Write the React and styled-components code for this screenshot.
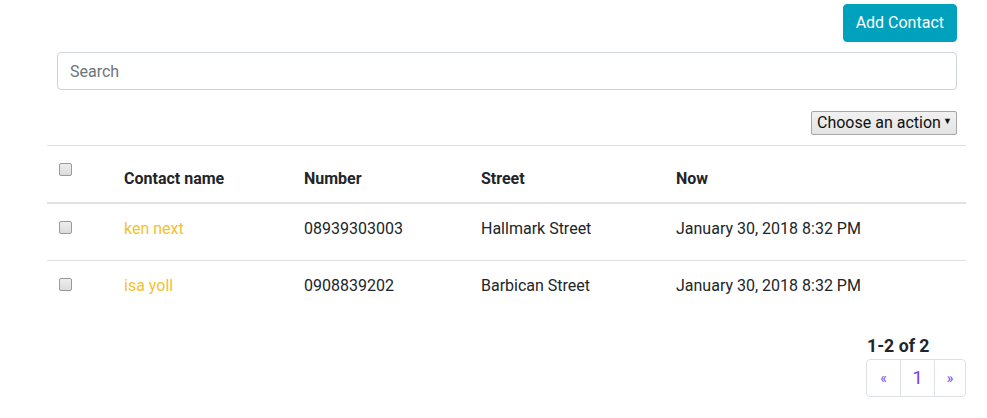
import React from 'react';
import styled, { createGlobalStyle } from 'styled-components';

const GlobalStyle = createGlobalStyle`
  body {
    margin: 0;
    background: #fff;
    color: #212529;
    font-family: Roboto, 'Liberation Sans', Arial, sans-serif;
    font-size: 16px;
    line-height: 1.5;
  }
`;

const contacts = [
  { name: 'ken next', number: '08939303003', street: 'Hallmark Street', now: 'January 30, 2018 8:32 PM' },
  { name: 'isa yoll', number: '0908839202', street: 'Barbican Street', now: 'January 30, 2018 8:32 PM' },
];

const Page = styled.div`
  display: flex;
  flex-direction: column;
`;

const TopBar = styled.div`
  display: flex;
  justify-content: flex-end;
  padding: 4px 30px 0 0;
`;

const AddButton = styled.button`
  height: 38px;
  padding: 6px 12px;
  border: 1px solid #00a1bd;
  border-radius: 4px;
  background: #00a1bd;
  color: #fff;
  font-family: inherit;
  font-size: 16px;
  line-height: 24px;
  cursor: pointer;
`;

const SearchInput = styled.input`
  box-sizing: border-box;
  height: 38px;
  margin: 10px 30px 0 57px;
  padding: 6px 12px;
  border: 1px solid #ced4da;
  border-radius: 4px;
  font-family: inherit;
  font-size: 16px;
  color: #495057;
  outline: none;
  &::placeholder {
    color: #6c757d;
  }
`;

const ActionBar = styled.div`
  display: flex;
  justify-content: flex-end;
  margin: 21px 30px 0 0;
`;

const SelectWrap = styled.div`
  position: relative;
  width: 146px;
  height: 24px;
`;

const ActionSelect = styled.select`
  appearance: none;
  box-sizing: border-box;
  width: 100%;
  height: 24px;
  margin: 0;
  padding: 0 0 0 5px;
  border: 1px solid #a6a6a6;
  border-radius: 2px;
  background: linear-gradient(#f1f1f1, #e4e4e4);
  color: #111;
  font-family: inherit;
  font-size: 16px;
  line-height: 22px;
`;

const Caret = styled.span`
  position: absolute;
  right: 5px;
  top: 6px;
  font-size: 9px;
  line-height: 9px;
  color: #111;
  pointer-events: none;
`;

const Table = styled.table`
  margin: 10px 21px 0 47px;
  width: 919px;
  border-collapse: collapse;
  table-layout: fixed;
`;

const HeadCell = styled.th`
  padding: 21px 12px 11px;
  border-top: 1px solid #dee2e6;
  border-bottom: 2px solid #dee2e6;
  text-align: left;
  vertical-align: ${(p) => (p.$top ? 'top' : 'bottom')};
  padding-top: ${(p) => (p.$top ? '12px' : '21px')};
  font-weight: 700;
  line-height: 24px;
`;

const Cell = styled.td`
  padding: 13px 12px 19px;
  border-top: 1px solid #dee2e6;
  vertical-align: top;
  line-height: 24px;
  white-space: nowrap;
`;

const NameLink = styled.a`
  color: #f3c130;
  text-decoration: none;
`;

const Check = styled.input.attrs({ type: 'checkbox' })`
  appearance: none;
  box-sizing: border-box;
  display: block;
  width: 13px;
  height: 13px;
  margin: ${(p) => (p.$head ? '5px' : '4px')} 0 0;
  border: 1px solid #9a9a9a;
  border-radius: 2px;
  background: linear-gradient(#ededed, #dcdcdc);
`;

const Footer = styled.div`
  display: flex;
  justify-content: flex-end;
  margin: 17px 21px 0 0;
`;

const PagerBlock = styled.div`
  display: flex;
  flex-direction: column;
`;

const Count = styled.div`
  font-size: 17.7px;
  font-weight: 700;
  line-height: 24px;
  padding-left: 1px;
`;

const Pager = styled.ul`
  display: flex;
  margin: 1px 0 0;
  padding: 0;
  list-style: none;
`;

const PageItem = styled.li`
  box-sizing: border-box;
  display: flex;
  align-items: center;
  justify-content: center;
  width: ${(p) => p.$w}px;
  height: 38px;
  border: 1px solid #dee2e6;
  margin-left: -1px;
  color: #7b3ff2;
  font-size: ${(p) => p.$size}px;
  &:first-child {
    margin-left: 0;
    border-radius: 4px 0 0 4px;
  }
  &:last-child {
    border-radius: 0 4px 4px 0;
  }
`;

export default function App() {
  return (
    <Page>
      <GlobalStyle />
      <TopBar>
        <AddButton>Add Contact</AddButton>
      </TopBar>
      <SearchInput placeholder="Search" />
      <ActionBar>
        <SelectWrap>
          <ActionSelect defaultValue="">
            <option value="">Choose an action</option>
            <option value="delete">Delete</option>
          </ActionSelect>
          <Caret>▼</Caret>
        </SelectWrap>
      </ActionBar>
      <Table>
        <colgroup>
          <col style={{ width: 65 }} />
          <col style={{ width: 180 }} />
          <col style={{ width: 177 }} />
          <col style={{ width: 195 }} />
          <col />
        </colgroup>
        <thead>
          <tr>
            <HeadCell $top>
              <Check $head />
            </HeadCell>
            <HeadCell>Contact name</HeadCell>
            <HeadCell>Number</HeadCell>
            <HeadCell>Street</HeadCell>
            <HeadCell>Now</HeadCell>
          </tr>
        </thead>
        <tbody>
          {contacts.map((c) => (
            <tr key={c.name}>
              <Cell>
                <Check />
              </Cell>
              <Cell>
                <NameLink href="#">{c.name}</NameLink>
              </Cell>
              <Cell>{c.number}</Cell>
              <Cell>{c.street}</Cell>
              <Cell>{c.now}</Cell>
            </tr>
          ))}
        </tbody>
      </Table>
      <Footer>
        <PagerBlock>
          <Count>1-2 of 2</Count>
          <Pager>
            <PageItem $w={35} $size={14}>«</PageItem>
            <PageItem $w={35} $size={19}>1</PageItem>
            <PageItem $w={32} $size={14}>»</PageItem>
          </Pager>
        </PagerBlock>
      </Footer>
    </Page>
  );
}
